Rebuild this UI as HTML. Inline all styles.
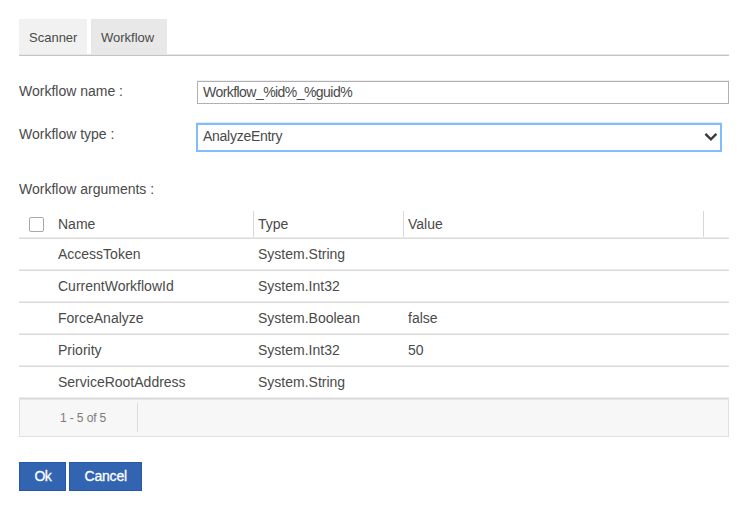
<!DOCTYPE html>
<html>
<head>
<meta charset="utf-8">
<style>
html,body{margin:0;padding:0;background:#fff;width:747px;height:508px;overflow:hidden;position:relative;}
*{box-sizing:border-box;}
body{font-family:"Liberation Sans",sans-serif;color:#4a4a4a;}
.a{position:absolute;white-space:nowrap;line-height:1;}
.tab{position:absolute;top:19px;height:35px;}
.hl{position:absolute;height:2px;border-top:1px solid #ececec;background:#dadada;}
.vl{position:absolute;width:1px;background:#d8d8d8;}
</style>
</head>
<body>
<!-- tabs -->
<div class="tab" style="left:19px;width:68px;background:#f1f1f1;"></div>
<div class="tab" style="left:91px;width:76px;background:#e8e8e8;"></div>
<div class="a" style="left:29px;top:31px;font-size:13px;">Scanner</div>
<div class="a" style="left:101px;top:31px;font-size:13px;">Workflow</div>
<div class="hl" style="left:19px;top:54px;width:710px;border-top-color:#e6e6e6;background:#c4c4c4;"></div>

<!-- form -->
<div class="a" style="left:19px;top:84px;font-size:14px;">Workflow name :</div>
<div style="position:absolute;left:197px;top:81px;width:532px;height:23px;border:1px solid #b0b0b0;box-shadow:0 -1px 0 #f0f0f0;"></div>
<div class="a" style="left:203px;top:85px;font-size:14px;letter-spacing:-0.55px;">Workflow_%id%_%guid%</div>

<div class="a" style="left:19px;top:127px;font-size:14px;">Workflow type :</div>
<div style="position:absolute;left:196px;top:123px;width:526px;height:29px;border:2px solid #80bdff;box-shadow:0 -1px 0 rgba(128,189,255,0.25);"></div>
<div class="a" style="left:203px;top:129px;font-size:14px;letter-spacing:-0.27px;">AnalyzeEntry</div>
<svg style="position:absolute;left:704px;top:130px;" width="14" height="14" viewBox="0 0 14 14"><path d="M1.4 3.9 L6.9 9.4 L12.4 3.9" fill="none" stroke="#3a3a3a" stroke-width="2.4"/></svg>

<div class="a" style="left:19px;top:182px;font-size:14px;">Workflow arguments :</div>

<!-- table header -->
<div style="position:absolute;left:29px;top:217px;width:15px;height:15px;border:1px solid #a8a8a8;border-radius:2px;background:#fff;"></div>
<div class="a" style="left:58px;top:217px;font-size:14px;">Name</div>
<div class="a" style="left:258px;top:217px;font-size:14px;">Type</div>
<div class="a" style="left:408px;top:217px;font-size:14px;">Value</div>
<div class="vl" style="left:253px;top:211px;height:27px;"></div>
<div class="vl" style="left:403px;top:211px;height:27px;"></div>
<div class="vl" style="left:703px;top:211px;height:27px;"></div>
<div class="hl" style="left:19px;top:237px;width:710px;"></div>

<!-- rows -->
<div class="a" style="left:58px;top:247px;font-size:14px;">AccessToken</div>
<div class="a" style="left:258px;top:247px;font-size:14px;">System.String</div>
<div class="hl" style="left:19px;top:269px;width:710px;"></div>

<div class="a" style="left:58px;top:279px;font-size:14px;">CurrentWorkflowId</div>
<div class="a" style="left:258px;top:279px;font-size:14px;">System.Int32</div>
<div class="hl" style="left:19px;top:301px;width:710px;"></div>

<div class="a" style="left:58px;top:311px;font-size:14px;">ForceAnalyze</div>
<div class="a" style="left:258px;top:311px;font-size:14px;">System.Boolean</div>
<div class="a" style="left:408px;top:311px;font-size:14px;">false</div>
<div class="hl" style="left:19px;top:333px;width:710px;"></div>

<div class="a" style="left:58px;top:343px;font-size:14px;">Priority</div>
<div class="a" style="left:258px;top:343px;font-size:14px;">System.Int32</div>
<div class="a" style="left:408px;top:343px;font-size:14px;">50</div>
<div class="hl" style="left:19px;top:365px;width:710px;"></div>

<div class="a" style="left:58px;top:375px;font-size:14px;">ServiceRootAddress</div>
<div class="a" style="left:258px;top:375px;font-size:14px;">System.String</div>

<!-- pager -->
<div class="hl" style="left:19px;top:397px;width:710px;"></div>
<div style="position:absolute;left:19px;top:399px;width:710px;height:38px;background:#f7f7f7;border:1px solid #e0e0e0;border-top-color:#e6e6e6;"></div>
<div class="vl" style="left:137px;top:403px;height:29px;background:#ddd;"></div>
<div class="a" style="left:60px;top:412px;font-size:12px;letter-spacing:-0.12px;color:#7a7a7a;">1 - 5 of 5</div>

<!-- buttons -->
<div style="position:absolute;left:19px;top:462px;width:47px;height:29px;background:#3264b1;border:1px solid #2657a8;"></div>
<div style="position:absolute;left:69px;top:462px;width:73px;height:29px;background:#3264b1;border:1px solid #2657a8;"></div>
<div class="a" style="left:34.5px;top:469px;font-size:14px;letter-spacing:-0.6px;color:#fff;-webkit-text-stroke:0.3px #fff;">Ok</div>
<div class="a" style="left:84.5px;top:469px;font-size:14px;letter-spacing:-0.2px;color:#fff;-webkit-text-stroke:0.3px #fff;">Cancel</div>
</body>
</html>
